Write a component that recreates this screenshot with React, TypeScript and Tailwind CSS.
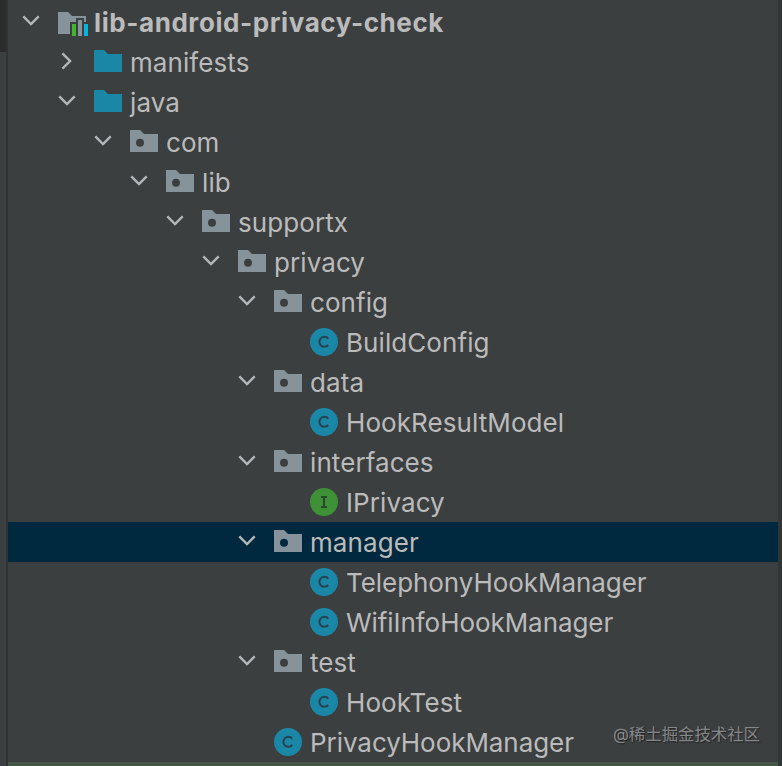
import clsx from "clsx";

type IconKind = "module" | "folder" | "package" | "class" | "interface";

interface TreeItem {
  name: string;
  depth: number;
  icon: IconKind;
  state?: "open" | "closed";
  selected?: boolean;
}

const INDENT = 36;

const items: TreeItem[] = [
  { name: "lib-android-privacy-check", depth: 0, icon: "module", state: "open" },
  { name: "manifests", depth: 1, icon: "folder", state: "closed" },
  { name: "java", depth: 1, icon: "folder", state: "open" },
  { name: "com", depth: 2, icon: "package", state: "open" },
  { name: "lib", depth: 3, icon: "package", state: "open" },
  { name: "supportx", depth: 4, icon: "package", state: "open" },
  { name: "privacy", depth: 5, icon: "package", state: "open" },
  { name: "config", depth: 6, icon: "package", state: "open" },
  { name: "BuildConfig", depth: 7, icon: "class" },
  { name: "data", depth: 6, icon: "package", state: "open" },
  { name: "HookResultModel", depth: 7, icon: "class" },
  { name: "interfaces", depth: 6, icon: "package", state: "open" },
  { name: "IPrivacy", depth: 7, icon: "interface" },
  { name: "manager", depth: 6, icon: "package", state: "open", selected: true },
  { name: "TelephonyHookManager", depth: 7, icon: "class" },
  { name: "WifiInfoHookManager", depth: 7, icon: "class" },
  { name: "test", depth: 6, icon: "package", state: "open" },
  { name: "HookTest", depth: 7, icon: "class" },
  { name: "PrivacyHookManager", depth: 6, icon: "class" },
];

function Chevron({ state }: { state?: "open" | "closed" }) {
  return (
    <svg viewBox="0 0 32 32" className="w-8 h-8 shrink-0" fill="none" stroke="#b4b7b9" strokeWidth="2.4">
      {state === "open" && <path d="M8.3 10.4 L16 18.1 L23.7 10.4" />}
      {state === "closed" && <path d="M11.4 7.3 L19.1 15 L11.4 22.7" />}
    </svg>
  );
}

function NodeIcon({ kind }: { kind: IconKind }) {
  return (
    <svg viewBox="0 0 32 32" className="w-8 h-8 shrink-0">
      {kind === "module" && (
        <>
          <path d="M2 6 H12 L16 10 H30 V16 H14 V28 H2 Z" fill="#87939a" />
          <path d="M14 30 V16 H20 V12 H28 V16 H34 V30 Z" fill="#3c3f40" />
          <rect x="16" y="18" width="4" height="12" fill="#3fb62b" />
          <rect x="22" y="14" width="4" height="16" fill="#87939a" />
          <rect x="28" y="18" width="4" height="12" fill="#08b3de" />
        </>
      )}
      {kind === "folder" && <path d="M2 4 H12 L16 8 H30 V26 H2 Z" fill="#1a87a6" />}
      {kind === "package" && (
        <path
          fillRule="evenodd"
          d="M2 4 H12 L16 8 H30 V26 H2 Z M12 12.7 a4 4 0 1 0 0 8 a4 4 0 1 0 0 -8 Z"
          fill="#87939a"
        />
      )}
      {kind === "class" && (
        <>
          <circle cx="16" cy="16" r="14" fill="#1a87a6" />
          <path d="M20.2 12.6 A5 5 0 1 0 20.2 19" fill="none" stroke="#27434f" strokeWidth="2" />
        </>
      )}
      {kind === "interface" && (
        <>
          <circle cx="16" cy="16" r="14" fill="#3f9138" />
          <path d="M13 11 H19 M16 11 V21 M13 21 H19" fill="none" stroke="#294a2c" strokeWidth="2" />
        </>
      )}
    </svg>
  );
}

function labelStyle(item: TreeItem) {
  if (item.depth === 0) return "font-bold tracking-[0.58px]";
  if (item.name.endsWith("HookManager")) return "tracking-[-0.06px]";
  return "tracking-[0.08px]";
}

function TreeRow({ item }: { item: TreeItem }) {
  return (
    <div
      className={clsx("flex h-10 items-center", item.selected && "bg-[#00293f]")}
      style={{ paddingLeft: 7 + item.depth * INDENT }}
    >
      <Chevron state={item.state} />
      <span className="ml-[9px] flex">
        <NodeIcon kind={item.icon} />
      </span>
      <span
        className={clsx("ml-1.5 whitespace-nowrap pt-0.5 text-[26px] leading-[38px] text-[#bbbbbb]", labelStyle(item))}
      >
        {item.name}
      </span>
    </div>
  );
}

export default function App() {
  return (
    <div className="relative flex h-[766px] w-[782px] overflow-hidden bg-[#3c3f40] font-['Inter','Noto_Sans_CJK_SC',sans-serif]">
      <div className="flex w-2 shrink-0 flex-col border-r-2 border-[#303334]">
        <div className="h-[52px] bg-[#2b2b2b]" />
      </div>

      <div className="flex flex-1 flex-col pt-0.5">
        {items.map((item) => (
          <TreeRow key={item.name} item={item} />
        ))}
        <div className="h-1 bg-[#48564a]" />
      </div>

      <div className="w-1 shrink-0 bg-[#323536]" />

      <div className="absolute bottom-5 right-[22px] text-[16.4px] leading-6 text-[#85888a] [text-shadow:1px_1px_1px_#222]">
        @稀土掘金技术社区
      </div>
    </div>
  );
}
